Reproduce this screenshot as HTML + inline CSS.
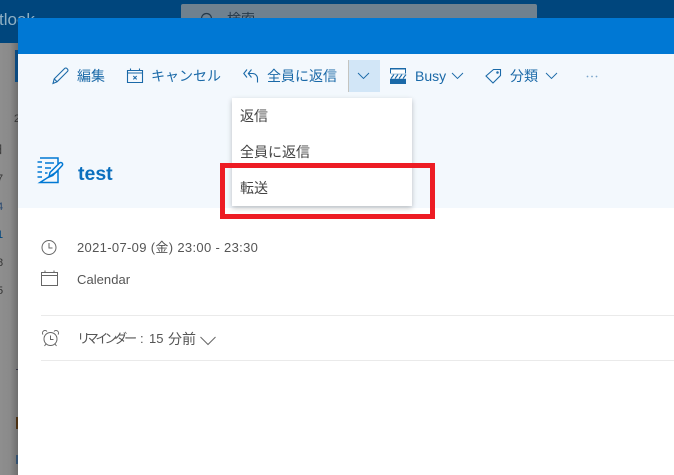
<!DOCTYPE html>
<html lang="ja">
<head>
<meta charset="utf-8">
<style>
html,body{margin:0;padding:0;background:#8a8a8a}
body{width:674px;height:475px;position:relative;overflow:hidden;font-family:"Liberation Sans","Noto Sans CJK JP",sans-serif;font-size:14px}
.a{position:absolute;white-space:nowrap}
svg{position:absolute;overflow:visible;fill:none}
.b{color:#1a69a8;line-height:20px;font-size:14px}
.g{color:#555;line-height:18px;font-size:13px}
.m{color:#444;left:240px;line-height:20px;font-size:14px}
.dim{color:#333;font-size:11px;line-height:14px}
</style>
</head>
<body>
<div class="a" style="left:0;top:0;width:18px;height:475px;background:linear-gradient(90deg,#8e8e8e,#8a8a8a 55%,#6e6e6e)"></div>
<div class="a" style="left:0;top:0;width:674px;height:43px;background:#00467d"></div>
<span class="a" style="left:-1px;top:10px;color:#8fb0c4;font-size:17px;line-height:20px">tlook</span>
<div class="a" style="left:15px;top:50px;width:3px;height:32px;background:#0b4a80"></div>
<div class="a" style="left:181px;top:4px;width:356px;height:14px;background:#6f818f;border-radius:2px 2px 0 0;overflow:hidden">
<svg style="left:19px;top:8px" width="16" height="16" stroke="#22384a" stroke-width="1.2"><circle cx="6.5" cy="6.5" r="5"/></svg>
<span class="a" style="left:46px;top:6px;color:#26394a;font-size:14px;line-height:18px">検索</span></div>
<div class="a dim" style="left:14px;top:112px">2</div>
<div class="a dim" style="left:-8px;top:143px">日</div>
<div class="a dim" style="left:-3px;top:172px">7</div>
<div class="a dim" style="left:-3px;top:200px;color:#2a4a70">4</div>
<div class="a dim" style="left:-3px;top:228px;color:#00477f">1</div>
<div class="a dim" style="left:-3px;top:256px">8</div>
<div class="a dim" style="left:-3px;top:284px">5</div>
<div class="a" style="left:16px;top:369px;width:2px;height:1px;background:#334"></div>
<div class="a" style="left:16px;top:417px;width:2px;height:12px;background:#4a3012"></div>
<div class="a" style="left:16px;top:455px;width:2px;height:9px;background:#33506e"></div>

<div class="a" style="left:18px;top:18px;width:656px;height:457px;background:#fff"></div>
<div class="a" style="left:18px;top:18px;width:656px;height:36px;background:#0078d4"></div>
<div class="a" style="left:18px;top:54px;width:656px;height:154px;background:#f3f8fd"></div>

<svg style="left:52px;top:67px" width="18" height="18" stroke="#1a69a8" stroke-width="1.1"><path d="M1 16.500l1.200-4.600L12.600 1.500a1.600 1.600 0 0 1 2.300 0l.6.6a1.600 1.600 0 0 1 0 2.300L5.100 14.800z M2.200 11.900l3 3"/></svg>
<span class="a b" style="left:77px;top:66px">編集</span>
<svg style="left:127px;top:68px" width="16" height="15" stroke="#1a69a8" stroke-width="1.100"><path d="M.5 2.500h15v12H.5z M.5 5h15 M3.500 .5v2 M12.500 .5v2"/><path d="M6.300 8l3.400 3.400 M9.700 8l-3.400 3.400"/></svg>
<span class="a b" style="left:151px;top:66px">キャンセル</span>
<svg style="left:243px;top:69px" width="16" height="14" stroke="#1a69a8" stroke-width="1.100"><path d="M4 .5L.8 4.500l3.200 4 M8.500 .5L5.300 4.500l3.200 4 M5.300 4.500h4.200a5 5 0 0 1 5 5v4"/></svg>
<span class="a b" style="left:267px;top:66px">全員に返信</span>

<div class="a" style="left:348px;top:60px;width:32px;height:32px;background:#d2e6f7"></div>
<div class="a" style="left:348px;top:60px;width:1px;height:32px;background:#c4c4c0"></div>
<svg style="left:357px;top:72px" width="13" height="8" stroke="#1a69a8" stroke-width=".9"><path d="M1 1l5.500 5.500L12 1"/></svg>

<svg style="left:390px;top:68px" width="16" height="16"><path d="M0 0h16v16H0z" fill="#fff"/><path d="M0 10.700h16v5.300H0z M0 0h16v1.500H0z M0 1.500h1v4H0z M15 1.500h1v4h-1z" fill="#1a69a8"/><path d="M1 5.700h14v.7H1z" fill="#6a9fc8"/><path d="M1 10.500l3-4 M5 10.500l3-4 M9 10.500l3-4 M13 10.500l3-4" stroke="#1a69a8" stroke-width="1.100"/></svg>
<span class="a b" style="left:415px;top:66px">Busy</span>
<svg style="left:451px;top:72px" width="13" height="8" stroke="#1a69a8" stroke-width=".9"><path d="M1 1l5.500 5.500L12 1"/></svg>

<svg style="left:485px;top:68px" width="17" height="16" stroke="#1a69a8" stroke-width="1.100"><path d="M1 8L8.500 1.500h7V7.500L8 15z"/><circle cx="12.500" cy="4.500" r=".7"/></svg>
<span class="a b" style="left:510px;top:66px">分類</span>
<svg style="left:545px;top:72px" width="13" height="8" stroke="#1a69a8" stroke-width=".9"><path d="M1 1l5.500 5.500L12 1"/></svg>
<svg style="left:586px;top:75px" width="12" height="3"><circle cx="1.500" cy="1.500" r=".9" fill="#7ba6cc"/><circle cx="6" cy="1.500" r=".9" fill="#7ba6cc"/><circle cx="10.500" cy="1.500" r=".9" fill="#7ba6cc"/></svg>

<div class="a" style="left:232px;top:98px;width:180px;height:108px;background:#fff;box-shadow:0 2px 5px rgba(0,0,0,.24)"></div>
<span class="a m" style="top:106px">返信</span>
<span class="a m" style="top:142px">全員に返信</span>
<span class="a m" style="top:178px">転送</span>
<div class="a" style="left:220px;top:163px;width:205px;height:46px;border:5px solid #ed1c24"></div>

<svg style="left:37px;top:157px" width="27" height="27" stroke="#0078d4" stroke-width="1.500"><path d="M3 1h18v6 M21 14v11.500H3z M.5 5h4.500 M.5 10h4.500 M.5 15h4.500 M.5 20h4.500 M8 6h9 M8 11h6 M8 16h2.500"/><path d="M12 20l1-4.500L22.500 6a1.800 1.800 0 0 1 2.600 2.600L15.800 18.500z"/></svg>
<span class="a" style="left:78px;top:161px;color:#0b6fbe;font-size:19.500px;line-height:26px;font-weight:bold">test</span>

<svg style="left:41px;top:240px" width="16" height="16" stroke="#666" stroke-width="1"><circle cx="8" cy="7.500" r="7"/><path d="M8 3V8h3.500"/></svg>
<span class="a g" style="left:77px;top:239px;letter-spacing:.33px">2021-07-09 (金) 23:00 - 23:30</span>
<svg style="left:41px;top:270px" width="17" height="17" stroke="#666" stroke-width="1"><path d="M.5 2.500h16v13H.5z M.5 5.500h16 M4 .5v2 M13 .5v2"/></svg>
<span class="a g" style="left:77px;top:271px;letter-spacing:.05px">Calendar</span>
<div class="a" style="left:41px;top:315px;width:633px;height:1px;background:#eaeaea"></div>
<svg style="left:42px;top:330px" width="17" height="17" stroke="#666" stroke-width="1"><circle cx="8.500" cy="9" r="6.500"/><path d="M8.500 5.500V9.500h3 M1 4.500a2.500 2.500 0 0 1 4-3 M16 4.500a2.500 2.500 0 0 0-4-3 M4 14l-1.500 2 M13 14l1.500 2"/></svg>
<span class="a g" style="left:78px;top:330px;font-feature-settings:'palt';letter-spacing:-2.200px">リマインダー</span>
<span class="a g" style="left:140px;top:330px">:</span>
<span class="a g" style="left:149px;top:330px">15</span>
<span class="a g" style="left:168px;top:330px;font-size:14px">分前</span>
<svg style="left:200px;top:336px" width="16" height="10" stroke="#666" stroke-width="1"><path d="M.5 1l7.500 7.500L15.500 1"/></svg>
<div class="a" style="left:41px;top:360px;width:633px;height:1px;background:#eaeaea"></div>
</body>
</html>
